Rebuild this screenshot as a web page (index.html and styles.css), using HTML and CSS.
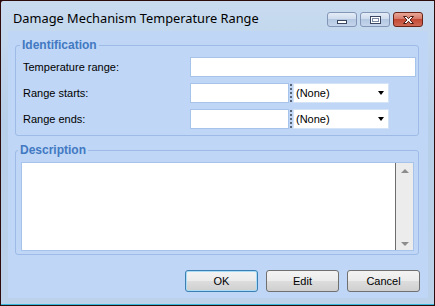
FILE: index.html
```html
<!DOCTYPE html>
<html lang="en">
<head>
    <meta charset="UTF-8">
    <title>Damage Mechanism Temperature Range</title>
    <link rel="stylesheet" href="styles.css">
</head>
<body>
    <div class="window">
        <div class="title-bar">
            <div class="title">Damage Mechanism Temperature Range</div>
            <div class="controls">
                <span class="ctl min"><i></i></span>
                <span class="ctl max"><i></i></span>
                <span class="ctl close">
                    <svg width="13" height="10" viewBox="0 0 13 10">
                        <path d="M1.5 1.5h3l2 2.2 2-2.2h3l-3.4 3.5 3.4 3.5h-3l-2-2.2-2 2.2h-3l3.4-3.5z" fill="#fff" stroke="#4a1a12" stroke-width="1" stroke-linejoin="round"/>
                    </svg>
                </span>
            </div>
        </div>
        <div class="client">
            <fieldset class="group ident">
                <legend>Identification</legend>
                <div class="row">
                    <label>Temperature range:</label>
                    <div class="field wide"></div>
                </div>
                <div class="row">
                    <label>Range starts:</label>
                    <div class="field short"></div>
                    <span class="grip"></span>
                    <div class="combo">(None)<span class="arrow"></span></div>
                </div>
                <div class="row">
                    <label>Range ends:</label>
                    <div class="field short"></div>
                    <span class="grip"></span>
                    <div class="combo">(None)<span class="arrow"></span></div>
                </div>
            </fieldset>
            <fieldset class="group desc">
                <legend>Description</legend>
                <div class="memo">
                    <div class="memo-text"></div>
                    <div class="scroll">
                        <span class="up"></span>
                        <span class="down"></span>
                    </div>
                </div>
            </fieldset>
            <div class="buttons">
                <button class="default">OK</button>
                <button>Edit</button>
                <button>Cancel</button>
            </div>
        </div>
    </div>
</body>
</html>
```

FILE: styles.css
```css
body {
    margin: 0;
    background: #2a0a0a;
    font-family: 'Liberation Sans', Arial, sans-serif;
    font-size: 11px;
    color: #000;
}

.window {
    width: 435px;
    height: 306px;
    box-sizing: border-box;
    border: 1px solid #2e0c0c;
    border-top-left-radius: 3px;
    background: linear-gradient(#c8dbef, #b8cfe9 40%, #bcd2ea);
    box-shadow: inset 0 -1px 0 #36b8da;
    padding: 0 6px 0 7px;
    display: flex;
    flex-direction: column;
}

.title-bar {
    height: 30px;
    display: flex;
    justify-content: space-between;
    align-items: flex-start;
    flex-shrink: 0;
}

.title {
    font-family: 'Noto Sans', sans-serif;
    font-size: 12.8px;
    line-height: 16px;
    padding: 9px 0 0 5px;
    color: #000;
}

.controls {
    display: flex;
    gap: 3px;
    margin: 11px 5px 0 0;
}

.ctl {
    width: 30px;
    height: 15px;
    box-sizing: border-box;
    border: 1px solid #8496b6;
    border-radius: 3px;
    background: linear-gradient(#e4ecf7, #cfdcee 45%, #b4c8e2 50%, #c4d5eb);
    display: flex;
    align-items: center;
    justify-content: center;
}

.ctl.min i {
    width: 10px;
    height: 4px;
    box-sizing: border-box;
    border: 1px solid #3b4760;
    background: #fff;
    margin-top: 5px;
}

.ctl.max i {
    width: 11px;
    height: 8px;
    box-sizing: border-box;
    border: 1px solid #3b4760;
    background: #fff;
    box-shadow: inset 0 0 0 1px #fff, inset 0 0 0 2px #7d8aa3;
}

.ctl.close {
    border-color: #6a2418;
    background: linear-gradient(#e9a897, #d5796a 45%, #c44a35 50%, #cf6a55);
}

.client {
    flex: 1;
    margin-bottom: 7px;
    background: #bfd6f6;
    padding: 7px 9px 5px 7px;
    display: flex;
    flex-direction: column;
}

.group {
    margin: 0;
    border: 1px solid #9dbbe6;
    border-radius: 3px;
    min-width: 0;
}

.group legend {
    font-weight: bold;
    font-size: 12px;
    line-height: 14px;
    color: #4279c2;
    padding: 0 2px;
    margin-left: -3px;
}

.ident {
    padding: 5px 2px 6px 7px;
    display: flex;
    flex-direction: column;
    gap: 6px;
}

.row {
    display: flex;
    align-items: center;
    height: 20px;
}

.row label {
    width: 167px;
    flex-shrink: 0;
}

.field {
    height: 20px;
    box-sizing: border-box;
    background: #fff;
    border: 1px solid #a6c3ea;
}

.field.wide {
    width: 226px;
}

.field.short {
    width: 99px;
}

.grip {
    width: 2px;
    height: 19px;
    margin: 0 1px 0 1px;
    background: repeating-linear-gradient(#5a6577 0 2px, transparent 2px 4px);
}

.combo {
    width: 96px;
    height: 20px;
    box-sizing: border-box;
    background: #fff;
    border: 1px solid #d5e3f6;
    padding: 0 4px 0 2px;
    display: flex;
    align-items: center;
    justify-content: space-between;
}

.arrow {
    width: 0;
    height: 0;
    border-left: 3.5px solid transparent;
    border-right: 3.5px solid transparent;
    border-top: 4px solid #000;
}

.desc {
    margin-top: 7px;
    padding: 5px 4px 3px 5px;
}

.memo {
    height: 89px;
    display: flex;
    border: 1px solid #a6c3ea;
    box-sizing: border-box;
    background: #fff;
}

.memo-text {
    flex: 1;
    border-right: 1px solid #6d6d6d;
}

.scroll {
    width: 17px;
    background: #ececec;
    display: flex;
    flex-direction: column;
    justify-content: space-between;
    align-items: center;
    padding: 6px 0 4px;
}

.scroll .up {
    border-left: 4px solid transparent;
    border-right: 4px solid transparent;
    border-bottom: 4px solid #8d8d8d;
}

.scroll .down {
    border-left: 4px solid transparent;
    border-right: 4px solid transparent;
    border-top: 4px solid #8d8d8d;
}

.buttons {
    margin-top: 15px;
    margin-right: -1px;
    display: flex;
    justify-content: flex-end;
    gap: 8px;
}

.buttons button {
    width: 73px;
    height: 22px;
    border: 1px solid #707070;
    border-radius: 3px;
    background: linear-gradient(#f3f3f3, #ebebeb 50%, #dddddd 50%, #cfcfcf);
    font-family: 'Liberation Sans', Arial, sans-serif;
    font-size: 11px;
    color: #000;
    padding: 0;
}

.buttons button.default {
    border-color: #3c7fb1;
    box-shadow: inset 0 0 0 1px #a9dcf6;
}
```
